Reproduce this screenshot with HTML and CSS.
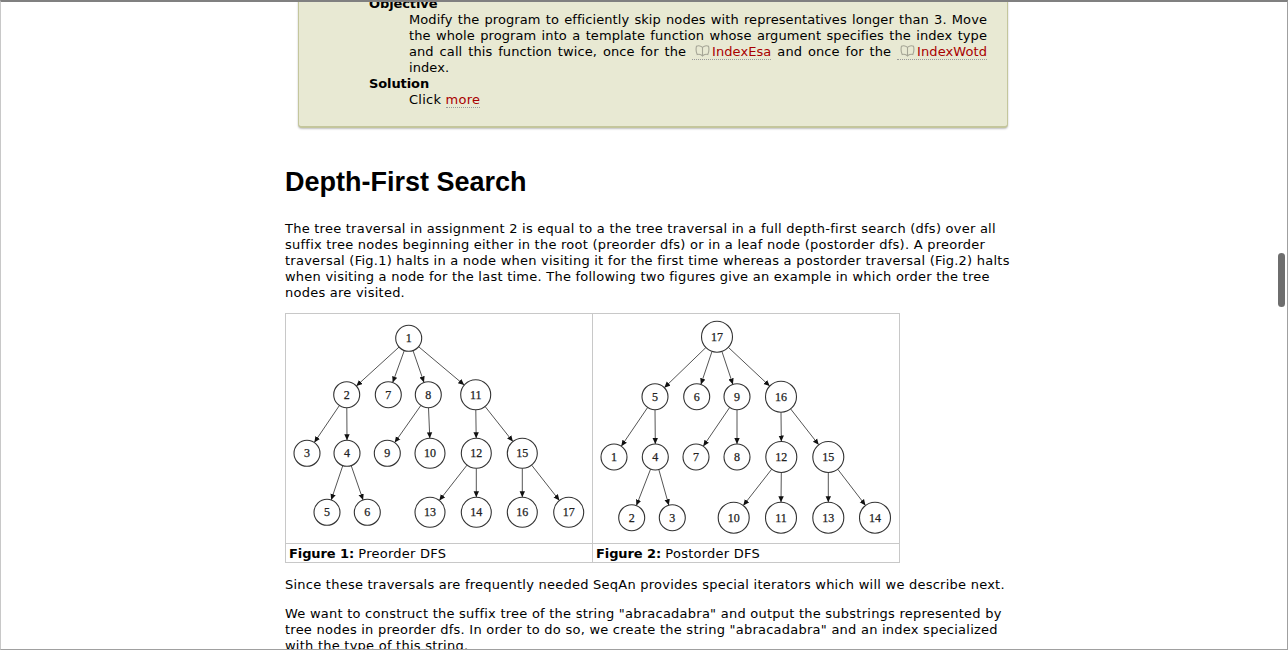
FILE: index.html
```html
<!DOCTYPE html>
<html lang="en">
<head>
  <meta charset="UTF-8">
  <title>Depth-First Search</title>
  <link rel="stylesheet" href="styles.css">
</head>
<body>
  <svg class="defs" width="0" height="0">
    <defs>
      <marker id="arrow" markerUnits="userSpaceOnUse" markerWidth="8" markerHeight="8" refX="6" refY="3" orient="auto">
        <path d="M0 0.3 L6 3 L0 5.7 Z" fill="#111"/>
      </marker>
      <symbol id="book" viewBox="0 0 15 12">
        <path d="M7.5 2.5 C6.5 1 3.5 .2 1.5 1.2 C.8 4 1 7 2.2 9.5 C4 9 6.3 9.5 7.5 11 C8.7 9.5 11 9 12.8 9.5 C14 7 14.2 4 13.5 1.2 C11.5 .2 8.5 1 7.5 2.5 Z M7.5 2.5 L7.5 11" fill="none" stroke="#a5a596" stroke-width="1.1"/>
      </symbol>
    </defs>
  </svg>

  <div class="window">
    <div class="content">

      <!-- Tarea -->
      <div class="assignment">
        <dl>
          <dt>Objective</dt>
          <dd class="task">Modify the program to efficiently skip nodes with representatives longer than 3. Move the whole program into a template function whose argument specifies the index type and call this function twice, once for the <a class="doc" href="#"><svg class="book"><use href="#book"/></svg>IndexEsa</a> and once for the <a class="doc" href="#"><svg class="book"><use href="#book"/></svg>IndexWotd</a> index.</dd>
          <dt>Solution</dt>
          <dd>Click <a class="more" href="#">more</a></dd>
        </dl>
      </div>

      <h1>Depth-First Search</h1>

      <p>The tree traversal in assignment 2 is equal to a the tree traversal in a full depth-first search (dfs) over all suffix tree nodes beginning either in the root (preorder dfs) or in a leaf node (postorder dfs). A preorder traversal (Fig.1) halts in a node when visiting it for the first time whereas a postorder traversal (Fig.2) halts when visiting a node for the last time. The following two figures give an example in which order the tree nodes are visited.</p>

      <table class="figures">
        <tr>
          <td class="tree-cell">
            <svg class="tree" width="306" height="229" viewBox="0 0 306 229">
              <g class="edges" marker-end="url(#arrow)">
                <line x1="113.1" y1="33" x2="70.3" y2="72"/>
                <line x1="118.3" y1="36.5" x2="106.7" y2="68.5"/>
                <line x1="127" y1="36.6" x2="138" y2="68.4"/>
                <line x1="132.6" y1="32.7" x2="178.2" y2="71"/>
                <line x1="53.4" y1="91.5" x2="28.3" y2="128.5"/>
                <line x1="60.8" y1="93.7" x2="61" y2="126.3"/>
                <line x1="134.9" y1="91.4" x2="108.7" y2="128.6"/>
                <line x1="142.5" y1="93.7" x2="143.8" y2="124.3"/>
                <line x1="189.8" y1="95.7" x2="190.2" y2="124.3"/>
                <line x1="199" y1="92.4" x2="226.9" y2="127.6"/>
                <line x1="56.8" y1="151.6" x2="45.2" y2="186"/>
                <line x1="65.2" y1="151.6" x2="77.1" y2="186"/>
                <line x1="181" y1="151.1" x2="153.3" y2="186.5"/>
                <line x1="190.3" y1="154.3" x2="190.3" y2="183.3"/>
                <line x1="236.3" y1="154.3" x2="236.3" y2="183.3"/>
                <line x1="245.6" y1="151.1" x2="273.4" y2="186.5"/>
              </g>
              <g class="nodes">
                <circle cx="122.7" cy="24.3" r="13"/><text x="122.7" y="28.3">1</text>
                <circle cx="60.7" cy="80.7" r="13"/><text x="60.7" y="84.7">2</text>
                <circle cx="102.3" cy="80.7" r="13"/><text x="102.3" y="84.7">7</text>
                <circle cx="142.3" cy="80.7" r="13"/><text x="142.3" y="84.7">8</text>
                <circle cx="189.7" cy="80.7" r="15"/><text x="189.7" y="84.7">11</text>
                <circle cx="21" cy="139.3" r="13"/><text x="21" y="143.3">3</text>
                <circle cx="61" cy="139.3" r="13"/><text x="61" y="143.3">4</text>
                <circle cx="101.3" cy="139.3" r="13"/><text x="101.3" y="143.3">9</text>
                <circle cx="144" cy="139.3" r="15"/><text x="144" y="143.3">10</text>
                <circle cx="190.3" cy="139.3" r="15"/><text x="190.3" y="143.3">12</text>
                <circle cx="236.3" cy="139.3" r="15"/><text x="236.3" y="143.3">15</text>
                <circle cx="41" cy="198.3" r="13"/><text x="41" y="202.3">5</text>
                <circle cx="81.3" cy="198.3" r="13"/><text x="81.3" y="202.3">6</text>
                <circle cx="144" cy="198.3" r="15"/><text x="144" y="202.3">13</text>
                <circle cx="190.3" cy="198.3" r="15"/><text x="190.3" y="202.3">14</text>
                <circle cx="236.3" cy="198.3" r="15"/><text x="236.3" y="202.3">16</text>
                <circle cx="282.7" cy="198.3" r="15"/><text x="282.7" y="202.3">17</text>
              </g>
            </svg>
          </td>
          <td class="tree-cell">
            <svg class="tree" width="306" height="229" viewBox="0 0 306 229">
              <g class="edges" marker-end="url(#arrow)">
                <line x1="112.9" y1="33.5" x2="71.3" y2="73.7"/>
                <line x1="119" y1="37.4" x2="107.9" y2="70.4"/>
                <line x1="128.9" y1="37.4" x2="139.9" y2="70.4"/>
                <line x1="135.3" y1="33.3" x2="176.7" y2="72.1"/>
                <line x1="54.7" y1="93.4" x2="28.3" y2="132.2"/>
                <line x1="62" y1="95.7" x2="62.3" y2="130"/>
                <line x1="136.7" y1="93.4" x2="110.3" y2="132.2"/>
                <line x1="144" y1="95.7" x2="144" y2="130"/>
                <line x1="188" y1="98.2" x2="188.3" y2="127.5"/>
                <line x1="197.6" y1="94.9" x2="225.7" y2="130.8"/>
                <line x1="57.6" y1="155.1" x2="43.4" y2="191.6"/>
                <line x1="65.8" y1="155.5" x2="75.8" y2="191.2"/>
                <line x1="178.7" y1="155.2" x2="150.3" y2="191.5"/>
                <line x1="188.3" y1="158.5" x2="188" y2="188.2"/>
                <line x1="235.3" y1="158.5" x2="235.3" y2="188.2"/>
                <line x1="244.8" y1="155.3" x2="272.5" y2="191.4"/>
              </g>
              <g class="nodes">
                <circle cx="124" cy="22.7" r="15.5"/><text x="124" y="26.7">17</text>
                <circle cx="62" cy="82.7" r="13"/><text x="62" y="86.7">5</text>
                <circle cx="103.7" cy="82.7" r="13"/><text x="103.7" y="86.7">6</text>
                <circle cx="144" cy="82.7" r="13"/><text x="144" y="86.7">9</text>
                <circle cx="188" cy="82.7" r="15.5"/><text x="188" y="86.7">16</text>
                <circle cx="21" cy="143" r="13"/><text x="21" y="147">1</text>
                <circle cx="62.3" cy="143" r="13"/><text x="62.3" y="147">4</text>
                <circle cx="103" cy="143" r="13"/><text x="103" y="147">7</text>
                <circle cx="144" cy="143" r="13"/><text x="144" y="147">8</text>
                <circle cx="188.3" cy="143" r="15.5"/><text x="188.3" y="147">12</text>
                <circle cx="235.3" cy="143" r="15.5"/><text x="235.3" y="147">15</text>
                <circle cx="38.7" cy="203.7" r="13"/><text x="38.7" y="207.7">2</text>
                <circle cx="79.3" cy="203.7" r="13"/><text x="79.3" y="207.7">3</text>
                <circle cx="140.7" cy="203.7" r="15.5"/><text x="140.7" y="207.7">10</text>
                <circle cx="188" cy="203.7" r="15.5"/><text x="188" y="207.7">11</text>
                <circle cx="235.3" cy="203.7" r="15.5"/><text x="235.3" y="207.7">13</text>
                <circle cx="282" cy="203.7" r="15.5"/><text x="282" y="207.7">14</text>
              </g>
            </svg>
          </td>
        </tr>
        <tr>
          <td class="caption"><b>Figure 1:</b> Preorder DFS</td>
          <td class="caption"><b>Figure 2:</b> Postorder DFS</td>
        </tr>
      </table>

      <p class="after-figures">Since these traversals are frequently needed SeqAn provides special iterators which will we describe next.</p>

      <p>We want to construct the suffix tree of the string "abracadabra" and output the substrings represented by tree nodes in preorder dfs. In order to do so, we create the string "abracadabra" and an index specialized with the type of this string.</p>
    </div>

    <!-- Barra de desplazamiento -->
    <div class="scroll-thumb"></div>
  </div>
</body>
</html>
```

FILE: styles.css
```css
/* Estilo global */
html, body {
  margin: 0;
  height: 100%;
  background-color: #fff;
}

body {
  font-family: "DejaVu Sans", Verdana, sans-serif;
  font-size: 13px;
  line-height: 16px;
  letter-spacing: 0.24px;
  color: #000;
}

.defs {
  position: absolute;
}

/* Ventana recortada, la pagina esta desplazada */
.window {
  position: relative;
  height: 650px;
  overflow: hidden;
  border-top: 2px solid #808080;
  border-right: 1px solid #a0a0a0;
  border-bottom: 1px solid #a0a0a0;
  border-left: 1px solid #c8c8c8;
  box-sizing: border-box;
}

.content {
  width: 735px;
  margin: -6px 0 0 284px;
}

/* Caja de la tarea */
.assignment {
  width: 710px;
  margin-left: 13px;
  box-sizing: border-box;
  padding: 0 20px 18px 70px;
  background-color: #e8e9d3;
  border-right: 1px solid #c4c69c;
  border-bottom: 2px solid #c4c69c;
  border-left: 1px solid #c4c69c;
  border-radius: 0 0 4px 4px;
  box-shadow: 0 1px 2px rgba(0, 0, 0, 0.25);
}

dl {
  margin: 0;
}

dt {
  font-weight: bold;
  letter-spacing: -0.1px;
}

dd {
  margin: 0 0 0 40px;
}

.task {
  text-align: justify;
  letter-spacing: 0.08px;
}

a {
  color: #a80000;
  text-decoration: none;
  border-bottom: 1px dotted #999;
}

.doc {
  padding-left: 3px;
}

.book {
  width: 15px;
  height: 12px;
  margin-right: 2px;
  vertical-align: -1px;
}

/* Titulos */
h1 {
  font-family: "Liberation Sans", Arial, sans-serif;
  font-size: 27px;
  line-height: 32px;
  font-weight: bold;
  letter-spacing: 0;
  margin: 38px 0 23px;
}

p {
  margin: 0 0 12px;
}

.after-figures {
  margin-bottom: 13px;
}

/* Tabla de figuras */
.figures {
  border-collapse: collapse;
  margin-bottom: 14px;
}

.figures td {
  border: 1px solid #c8c8c8;
  padding: 0;
}

.figures b {
  letter-spacing: -0.1px;
}

.tree {
  display: block;
}

.figures .caption {
  padding: 2px 3px 0;
  height: 16px;
}

.edges line {
  stroke: #555;
  stroke-width: 1;
}

.nodes circle {
  fill: #fff;
  stroke: #333;
  stroke-width: 1.1;
}

.nodes text {
  font-family: "Liberation Serif", "Times New Roman", serif;
  font-size: 12px;
  letter-spacing: 0;
  text-anchor: middle;
  fill: #222;
  stroke: #222;
  stroke-width: 0.25;
}

.scroll-thumb {
  position: absolute;
  top: 251px;
  right: 2px;
  width: 7px;
  height: 54px;
  border-radius: 4px;
  background-color: #6e6e6e;
}
```
